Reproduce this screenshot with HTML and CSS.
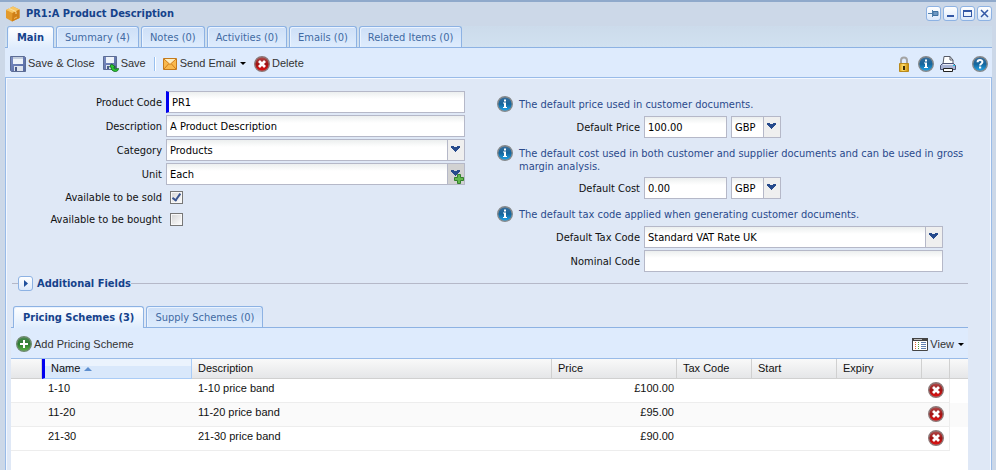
FILE: index.html
```html
<!DOCTYPE html>
<html lang="en">
<head>
  <meta charset="UTF-8">
  <meta name="viewport" content="width=device-width, initial-scale=1.0">
  <title>PR1:A Product Description</title>
  <link rel="stylesheet" href="styles.css">
</head>
<body>
  <svg class="sprites" aria-hidden="true">
    <defs>
      <linearGradient id="blue" x1="0" y1="0" x2="0" y2="1">
        <stop offset="0" stop-color="#3d6f9c"/><stop offset=".5" stop-color="#14659c"/><stop offset="1" stop-color="#22a8ec"/>
      </linearGradient>
      <linearGradient id="red" x1="0" y1="0" x2="0" y2="1">
        <stop offset="0" stop-color="#b05050"/><stop offset=".5" stop-color="#a01414"/><stop offset="1" stop-color="#e81010"/>
      </linearGradient>
      <linearGradient id="green" x1="0" y1="0" x2="0" y2="1">
        <stop offset="0" stop-color="#4c8a50"/><stop offset=".5" stop-color="#2c7a30"/><stop offset="1" stop-color="#5cb844"/>
      </linearGradient>
      <linearGradient id="gold" x1="0" y1="0" x2="1" y2="0">
        <stop offset="0" stop-color="#d99a10"/><stop offset=".4" stop-color="#ffe070"/><stop offset="1" stop-color="#c98800"/>
      </linearGradient>
      <linearGradient id="steel" x1="0" y1="0" x2="1" y2="1">
        <stop offset="0" stop-color="#7c8ec4"/><stop offset="1" stop-color="#5568a0"/>
      </linearGradient>
    </defs>
    <symbol id="i-info" viewBox="0 0 16 16">
      <circle cx="8" cy="8" r="7.3" fill="url(#blue)" stroke="#85898c" stroke-width="1.4"/>
      <path d="M7 3.5h2v2H7zM6 6.5h3V11h1v1H6v-1h1V7.5H6z" fill="#fff"/>
    </symbol>
    <symbol id="i-help" viewBox="0 0 16 16">
      <circle cx="8" cy="8" r="7.3" fill="url(#blue)" stroke="#85898c" stroke-width="1.4"/>
      <path d="M5.6 6.2C5.6 3.3 10.4 3.3 10.4 6c0 1.700-2.300 1.700-2.300 3.500" fill="none" stroke="#fff" stroke-width="2"/>
      <path d="M7 10.500h2.200v2H7z" fill="#fff"/>
    </symbol>
    <symbol id="i-delete" viewBox="0 0 16 16">
      <circle cx="8" cy="8" r="7.3" fill="url(#red)" stroke="#8d7878" stroke-width="1.4"/>
      <path d="M5 5l6 6M11 5l-6 6" stroke="#fff" stroke-width="2.8"/>
    </symbol>
    <symbol id="i-add" viewBox="0 0 16 16">
      <circle cx="8" cy="8" r="7.3" fill="url(#green)" stroke="#6f8a70" stroke-width="1.4"/>
      <path d="M8 4v8M4 8h8" stroke="#fff" stroke-width="2"/>
    </symbol>
    <symbol id="i-disk" viewBox="0 0 16 16">
      <path d="M.5.5h14l1 1v14h-14l-1-1z" fill="url(#steel)" stroke="#5c6c94"/>
      <path d="M3 1h10v7H3z" fill="#eef3fa"/>
      <path d="M3 1h10v2H3z" fill="#c3cede"/>
      <path d="M4 10h9v5H4z" fill="#dfe5ef"/>
      <path d="M5 11h2v4H5z" fill="#4a5a88"/>
    </symbol>
    <symbol id="i-box" viewBox="0 0 16 16">
      <path d="M8 .5l6.5 3V12L7 15.500 1 12V4z" fill="#e39a2c"/>
      <path d="M8 .5l6.500 3L7.500 7 1 4z" fill="#f8c765"/>
      <path d="M7.500 7l7-3.500V12L7 15.500z" fill="#cf7f17"/>
      <path d="M4 2.500l7 3V8" fill="none" stroke="#fbe0a0"/>
      <path d="M9 12.500l3-1.500" stroke="#f4bd60"/>
    </symbol>
    <symbol id="i-chevron" viewBox="0 0 9 6">
      <path d="M0 0h3v1h3V0h3v2H8v1H7v1H6v1H5v1H4V5H3V4H2V3H1V2H0z" fill="#274b8c"/>
    </symbol>
  </svg>

  <main class="window">
    <header class="titlebar">
      <svg class="icon"><use href="#i-box"/></svg>
      <h1>PR1:A Product Description</h1>
      <div class="tools">
        <button type="button" class="tool" aria-label="Pin"><svg viewBox="0 0 15 15"><path d="M2 7.500h4M6.500 4v7" stroke="#5583ad"/><path d="M7 5.500h5v4H7z" fill="#6f98c2" stroke="#3f70a0"/></svg></button>
        <button type="button" class="tool" aria-label="Minimise"><svg viewBox="0 0 15 15"><path d="M4 9h7v2H4z" fill="#3357a5"/></svg></button>
        <button type="button" class="tool" aria-label="Maximise"><svg viewBox="0 0 15 15"><path d="M3 4h9v7H3zM4 6v4h7V6z" fill="#3357a5" fill-rule="evenodd"/></svg></button>
        <button type="button" class="tool" aria-label="Close"><svg viewBox="0 0 15 15"><path d="M4 4l7 7M11 4l-7 7" stroke="#3357a5" stroke-width="1.5"/></svg></button>
      </div>
    </header>

    <nav class="tabs main-tabs">
      <button type="button" class="tab active">Main</button>
      <button type="button" class="tab">Summary (4)</button>
      <button type="button" class="tab">Notes (0)</button>
      <button type="button" class="tab">Activities (0)</button>
      <button type="button" class="tab">Emails (0)</button>
      <button type="button" class="tab">Related Items (0)</button>
    </nav>

    <div class="toolbar main-toolbar">
      <button type="button" class="action"><svg class="icon"><use href="#i-disk"/></svg>Save &amp; Close</button>
      <button type="button" class="action"><svg class="icon" viewBox="0 0 16 16"><path d="M.5.5h13v13H.5z" fill="url(#steel)" stroke="#5c6c94"/><path d="M3 1h8v6H3z" fill="#eef3fa"/><path d="M3 9h8v4H3z" fill="#dfe5ef"/><path d="M4 10h2v3H4z" fill="#4a5a88"/><path d="M8.500 8l-2 3h1.500c0 3 2 4.500 4.500 4.500 1.500 0 3-1 3-3l-3 .5c-1.500 0-1.500-1-1.500-2h1.500z" fill="#2cc934" stroke="#0b5f12" stroke-width=".8"/></svg>Save</button>
      <span class="separator"></span>
      <button type="button" class="action"><svg class="icon" viewBox="0 0 16 16"><path d="M1.500 2.500h13v11h-13z" fill="#f9b94c" stroke="#c47a1c"/><path d="M2 3l6 5.500L14 3z" fill="#fdeec0"/><path d="M2 3l6 5.500L14 3M2 13l4.500-5M14 13L9.500 8" fill="none" stroke="#cf7c1c"/></svg>Send Email<span class="arrow"></span></button>
      <button type="button" class="action"><svg class="icon"><use href="#i-delete"/></svg>Delete</button>
      <div class="right">
        <button type="button" class="action" aria-label="Lock"><svg class="icon" viewBox="0 0 16 16"><path d="M5 8V4.500C5 .5 11 .5 11 4.500V8" fill="none" stroke="#a4a4a4" stroke-width="2"/><path d="M3.500 7.500h9v8h-9z" fill="url(#gold)" stroke="#b98a1c"/><path d="M7 10h2v4H7z" fill="#3a2c08"/></svg></button>
        <button type="button" class="action" aria-label="Information"><svg class="icon"><use href="#i-info"/></svg></button>
        <button type="button" class="action" aria-label="Print"><svg class="icon" viewBox="0 0 16 16"><path d="M3 8L4 .5h6L13 4v4z" fill="#fff" stroke="#565a66"/><path d="M10 .5V4h3" fill="none" stroke="#565a66"/><path d="M.5 9.500l2-2h11l2 2v4H.5z" fill="#a9b3d4" stroke="#4b5273"/><path d="M3 8h10v1H3z" fill="#e8ecf8"/><path d="M13 9h2v1h-2z" fill="#18c8e8"/><path d="M3.500 12.500h9v3h-9z" fill="#fff" stroke="#222"/></svg></button>
        <button type="button" class="action help" aria-label="Help"><svg class="icon"><use href="#i-help"/></svg></button>
      </div>
    </div>

    <section class="panel">
      <form class="form">
        <div class="column">
          <div class="field"><label for="code">Product Code</label><input type="text" id="code" class="required" value="PR1"></div>
          <div class="field"><label for="description">Description</label><input type="text" id="description" value="A Product Description"></div>
          <div class="field"><label for="category">Category</label>
            <span class="combo"><select id="category"><option>Products</option></select><svg class="chevron"><use href="#i-chevron"/></svg></span></div>
          <div class="field"><label for="unit">Unit</label>
            <span class="combo add"><select id="unit"><option>Each</option></select><svg class="chevron"><use href="#i-chevron"/></svg><svg class="plus" viewBox="0 0 10 10"><path d="M3.500.5h3v3h3v3h-3v3h-3v-3h-3v-3h3z" fill="#62b84c" stroke="#33802c"/></svg></span></div>
          <div class="field check"><label for="sold">Available to be sold</label><input type="checkbox" id="sold" checked></div>
          <div class="field check"><label for="bought">Available to be bought</label><input type="checkbox" id="bought"></div>
        </div>

        <div class="column">
          <div class="note"><svg class="icon"><use href="#i-info"/></svg><p>The default price used in customer documents.</p></div>
          <div class="field"><label for="price">Default Price</label><input type="text" id="price" class="amount" value="100.00">
            <span class="combo currency"><select aria-label="Price currency"><option>GBP</option></select><svg class="chevron"><use href="#i-chevron"/></svg></span></div>
          <div class="note"><svg class="icon"><use href="#i-info"/></svg><p>The default cost used in both customer and supplier documents and can be used in gross margin analysis.</p></div>
          <div class="field"><label for="cost">Default Cost</label><input type="text" id="cost" class="amount" value="0.00">
            <span class="combo currency"><select aria-label="Cost currency"><option>GBP</option></select><svg class="chevron"><use href="#i-chevron"/></svg></span></div>
          <div class="note"><svg class="icon"><use href="#i-info"/></svg><p>The default tax code applied when generating customer documents.</p></div>
          <div class="field"><label for="tax">Default Tax Code</label>
            <span class="combo"><select id="tax"><option>Standard VAT Rate UK</option></select><svg class="chevron"><use href="#i-chevron"/></svg></span></div>
          <div class="field"><label for="nominal">Nominal Code</label><input type="text" id="nominal"></div>
        </div>
      </form>

      <div class="section-title">
        <button type="button" class="tool" aria-label="Expand"><svg viewBox="0 0 15 15"><path d="M6 4l4 3.500L6 11z" fill="#1f4f9c"/></svg></button>
        <h2>Additional Fields</h2>
      </div>

      <div class="schemes">
        <nav class="tabs">
          <button type="button" class="tab active">Pricing Schemes (3)</button>
          <button type="button" class="tab">Supply Schemes (0)</button>
        </nav>
        <div class="toolbar grid-toolbar">
          <button type="button" class="action"><svg class="icon"><use href="#i-add"/></svg>Add Pricing Scheme</button>
          <div class="right">
            <button type="button" class="action"><svg class="icon" viewBox="0 0 16 16"><path d="M.5 2.500h15v12H.5z" fill="#fff" stroke="#444"/><path d="M0 2h16v3H0z" fill="#444"/><path d="M2 3.500h8" stroke="#bbb"/><path d="M3.500 6v8" stroke="#e06030" stroke-dasharray="1 1"/><path d="M6.500 6v8" stroke="#58a038" stroke-dasharray="1 1"/><path d="M9 6.500h5M9 8.500h5M9 10.500h5M9 12.500h5" stroke="#5f7fb0"/></svg>View<span class="arrow"></span></button>
          </div>
        </div>
        <table class="grid">
          <colgroup>
            <col class="c-blank"><col class="c-name"><col><col class="c-price"><col class="c-tax"><col class="c-date"><col class="c-date"><col class="c-action"><col class="c-end">
          </colgroup>
          <thead>
            <tr><th></th><th class="sorted">Name<span class="sort"></span></th><th>Description</th><th>Price</th><th>Tax Code</th><th>Start</th><th>Expiry</th><th></th><th></th></tr>
          </thead>
          <tbody>
            <tr><td></td><td>1-10</td><td>1-10 price band</td><td class="num">£100.00</td><td></td><td></td><td></td><td class="act"><button type="button" aria-label="Delete 1-10"><svg class="icon"><use href="#i-delete"/></svg></button></td><td></td></tr>
            <tr><td></td><td>11-20</td><td>11-20 price band</td><td class="num">£95.00</td><td></td><td></td><td></td><td class="act"><button type="button" aria-label="Delete 11-20"><svg class="icon"><use href="#i-delete"/></svg></button></td><td></td></tr>
            <tr><td></td><td>21-30</td><td>21-30 price band</td><td class="num">£90.00</td><td></td><td></td><td></td><td class="act"><button type="button" aria-label="Delete 21-30"><svg class="icon"><use href="#i-delete"/></svg></button></td><td></td></tr>
          </tbody>
        </table>
      </div>
    </section>
  </main>
</body>
</html>
```

FILE: styles.css
```css
*, *::before, *::after {
  box-sizing: border-box;
}
body {
  margin: 0;
  font: 11px/13px "DejaVu Sans Condensed", "DejaVu Sans", sans-serif;
  color: #111;
  background: #ccd8e8;
}
button, input, select {
  font: inherit;
  color: inherit;
}
button {
  border: 0;
  padding: 0;
  background: none;
  cursor: pointer;
}
h1, h2, p {
  margin: 0;
  font-size: 11px;
}
.sprites {
  position: absolute;
  width: 0;
  height: 0;
}
.icon {
  width: 16px;
  height: 16px;
  flex: none;
  display: block;
}

/* window frame */
.window {
  min-height: 100vh;
  display: flex;
  flex-direction: column;
  padding: 0 4px 0 5px;
  border-top: 2px solid #8fa9cb;
  background: #ccd8e8;
}
.titlebar {
  height: 24px;
  display: flex;
  align-items: center;
  gap: 5px;
  padding-bottom: 1px;
}
.titlebar h1 {
  flex: 1;
  color: #15428b;
}
.tools {
  display: flex;
  gap: 2px;
}
.tool {
  width: 15px;
  height: 15px;
  border: 1px solid #8db2e3;
  border-radius: 3px;
  background: linear-gradient(#fff, #dce9fb);
  display: flex;
}
.tool svg {
  width: 15px;
  height: 15px;
  margin: -1px;
  flex: none;
}

/* tabs */
.tabs {
  display: flex;
  align-items: flex-end;
  gap: 2px;
  height: 22px;
  padding: 0 2px;
  border-bottom: 1px solid #8db2e3;
}
.main-tabs {
  background: linear-gradient(#ccdbeb, #d1e1f0);
}
.tab {
  height: 21px;
  padding: 0 8px;
  border: 1px solid #8db2e3;
  border-bottom: 0;
  border-radius: 3px 3px 0 0;
  background: linear-gradient(#cddff7, #deecfd);
  box-shadow: inset 1px 1px #eaf3ff;
  color: #416aa3;
}
.tab.active {
  height: 22px;
  padding: 0 9px;
  margin-bottom: -1px;
  background: linear-gradient(#fff, #deecfd);
  color: #15428b;
  font-weight: bold;
}

/* toolbars */
.toolbar {
  height: 30px;
  display: flex;
  align-items: center;
  padding: 2px 4px 0 5px;
  background: #deebfd;
  border-bottom: 1px solid #99bbe8;
  font-family: "Liberation Sans", Arial, sans-serif;
  color: #333;
}
.main-toolbar {
  gap: 8px;
}
.grid-toolbar {
  height: 31px;
}
.action {
  display: flex;
  align-items: center;
  gap: 2px;
}
.arrow {
  margin-left: 2px;
  border: 3px solid transparent;
  border-top-color: #000;
  border-bottom: 0;
}
.separator {
  width: 2px;
  height: 14px;
  margin-right: -2px;
  background: #98c0f0;
  border-right: 1px solid #fff;
}
.right {
  margin-left: auto;
  display: flex;
  gap: 6px;
}
.help {
  margin-left: 10px;
}

/* form */
.panel {
  flex: 1;
  display: flex;
  flex-direction: column;
  padding: 13px 23px 0 5px;
  border: solid #99bbe8;
  border-width: 0 1px;
  background: #dfe8f6;
  box-shadow: inset 1px 1px #f4f8ff, inset -1px 0 #f4f8ff;
}
.form {
  display: grid;
  grid-template-columns: 1fr 1fr;
  gap: 32px;
  padding: 0 25px 0 8px;
}
.column {
  display: flex;
  flex-direction: column;
  gap: 2px;
}
.field {
  display: flex;
  align-items: center;
  gap: 4px;
  height: 22px;
}
.field label {
  width: 143px;
  flex: none;
  text-align: right;
}
input[type="text"], select {
  flex: 1;
  min-width: 0;
  width: 100%;
  height: 22px;
  padding: 0 3px;
  border: 1px solid #b5b8c8;
  border-radius: 0;
  background: linear-gradient(#ecefef, #fff 7px);
  color: #000;
}
input.required {
  border-left: 3px solid #0000f0;
}
input.amount {
  flex: none;
  width: 83px;
}
.combo {
  position: relative;
  flex: 1;
  display: flex;
}
.combo::after {
  content: "";
  position: absolute;
  top: 0;
  right: 0;
  width: 18px;
  height: 22px;
  border: 1px solid #b5b8c8;
  background: #efefef;
  pointer-events: none;
}
.combo.add::after {
  background: #d2d2d2;
}
.combo.currency {
  flex: none;
  width: 50px;
}
.combo select {
  appearance: none;
}
.chevron, .plus {
  position: absolute;
  z-index: 1;
  pointer-events: none;
}
.chevron {
  top: 7px;
  right: 5px;
  width: 9px;
  height: 6px;
}
.plus {
  right: 1px;
  bottom: 1px;
  width: 10px;
  height: 10px;
}
.check {
  height: 20px;
  gap: 8px;
}
input[type="checkbox"] {
  appearance: none;
  width: 13px;
  height: 13px;
  margin: 0;
  border: 1px solid #777;
  background: linear-gradient(135deg, #d4d4d4, #fff);
  box-shadow: inset 0 0 0 1px #f8f8f8;
}
input[type="checkbox"]:checked::after {
  content: "";
  display: block;
  width: 5px;
  height: 9px;
  margin: 0 3px;
  border: solid #3a5590;
  border-width: 0 2px 2px 0;
  transform: rotate(35deg);
}
.note {
  display: flex;
  gap: 6px;
  padding: 5px 0 2px;
  margin-right: -28px;
  color: #2a4a8c;
}
.note p {
  padding-top: 2px;
}

.section-title {
  display: flex;
  align-items: center;
  gap: 4px;
  margin-top: 4px;
  padding-left: 1px;
  color: #15428b;
}
.section-title::before, .section-title::after {
  content: "";
  height: 1px;
  background: #b5b8c8;
}
.section-title::before {
  width: 6px;
  margin-right: -4px;
}
.section-title::after {
  flex: 1;
  margin-left: -4px;
}

/* grid */
.schemes {
  flex: 1;
  margin-top: 15px;
  background: #fff;
}
.schemes .tabs {
  background: #dfe8f6;
}
.grid {
  width: 100%;
  table-layout: fixed;
  border-collapse: separate;
  border-spacing: 0;
  font-family: "Liberation Sans", Arial, sans-serif;
}
.c-blank { width: 31px; }
.c-name { width: 150px; }
.c-price { width: 125px; }
.c-tax { width: 75px; }
.c-date { width: 85px; }
.c-action { width: 28px; }
.c-end { width: 18px; }
.grid th {
  height: 20px;
  padding: 0 6px;
  border: solid #d0d0d0;
  border-width: 0 1px 1px 0;
  background: linear-gradient(#f9f9f9, #e5e6e8);
  font-weight: normal;
  text-align: left;
}
.grid th:last-child {
  border-right: 0;
}
.grid th.sorted {
  border-left: 3px solid #0000f0;
  border-right-color: #aaccf6;
  border-bottom-color: #aaccf6;
  background: linear-gradient(#ebf3fd 7px, #d9e8fb 7px);
}
.sort {
  display: inline-block;
  margin: 0 0 1px 4px;
  border: 4px solid transparent;
  border-top: 0;
  border-bottom-color: #5e8fcf;
}
.grid td {
  height: 24px;
  padding: 3px 6px 0;
  border-bottom: 1px solid #ededed;
  vertical-align: top;
}
.grid tbody tr:nth-child(even) td {
  background: #fafafa;
}
.grid tbody td:last-child {
  background: #fff;
  border-bottom: 0;
}
.grid .num {
  padding-right: 3px;
  text-align: right;
}
.grid .act {
  border-right: 1px solid #ededed;
}
```
